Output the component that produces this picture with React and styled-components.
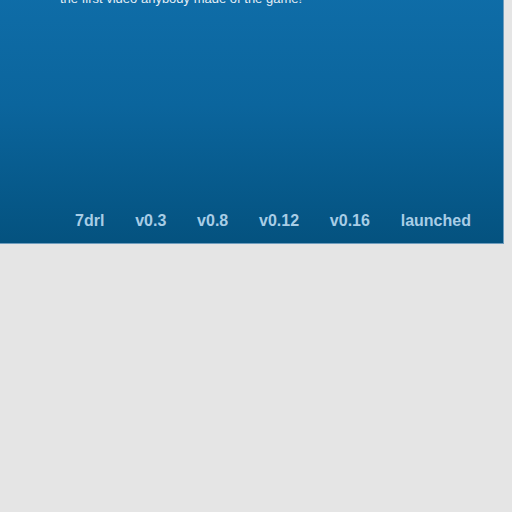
import React from 'react';
import styled, { createGlobalStyle } from 'styled-components';

const GlobalStyle = createGlobalStyle`
  html, body {
    margin: 0;
    padding: 0;
    background: #e5e5e5;
    font-family: 'Liberation Sans', Arial, sans-serif;
    overflow: hidden;
  }
`;

const Panel = styled.section`
  box-sizing: border-box;
  width: 504px;
  height: 253px;
  margin-top: -9px;
  display: flex;
  flex-direction: column;
  justify-content: space-between;
  background: linear-gradient(to bottom, #0f6da8 0%, #0b659d 45%, #04527f 100%);
  border-right: 1px solid #6f9dbd;
  border-bottom: 1px solid #6f9dbd;
  padding: 0 0 13px 0;
`;

const Caption = styled.p`
  margin: 0;
  padding-left: 60px;
  font-size: 13px;
  line-height: 15px;
  color: #e4eef6;
`;

const Timeline = styled.ul`
  list-style: none;
  margin: 0;
  padding: 0 0 0 75px;
  display: flex;
  gap: 30.8px;
`;

const Milestone = styled.li`
  font-size: 16px;
  font-weight: bold;
  line-height: 18px;
  color: #a8cde6;
`;

const milestones = ['7drl', 'v0.3', 'v0.8', 'v0.12', 'v0.16', 'launched'];

const App = () => (
  <>
    <GlobalStyle />
    <Panel>
      <Caption>the first video anybody made of the game!</Caption>
      <Timeline>
        {milestones.map((m) => (
          <Milestone key={m}>{m}</Milestone>
        ))}
      </Timeline>
    </Panel>
  </>
);

export default App;
